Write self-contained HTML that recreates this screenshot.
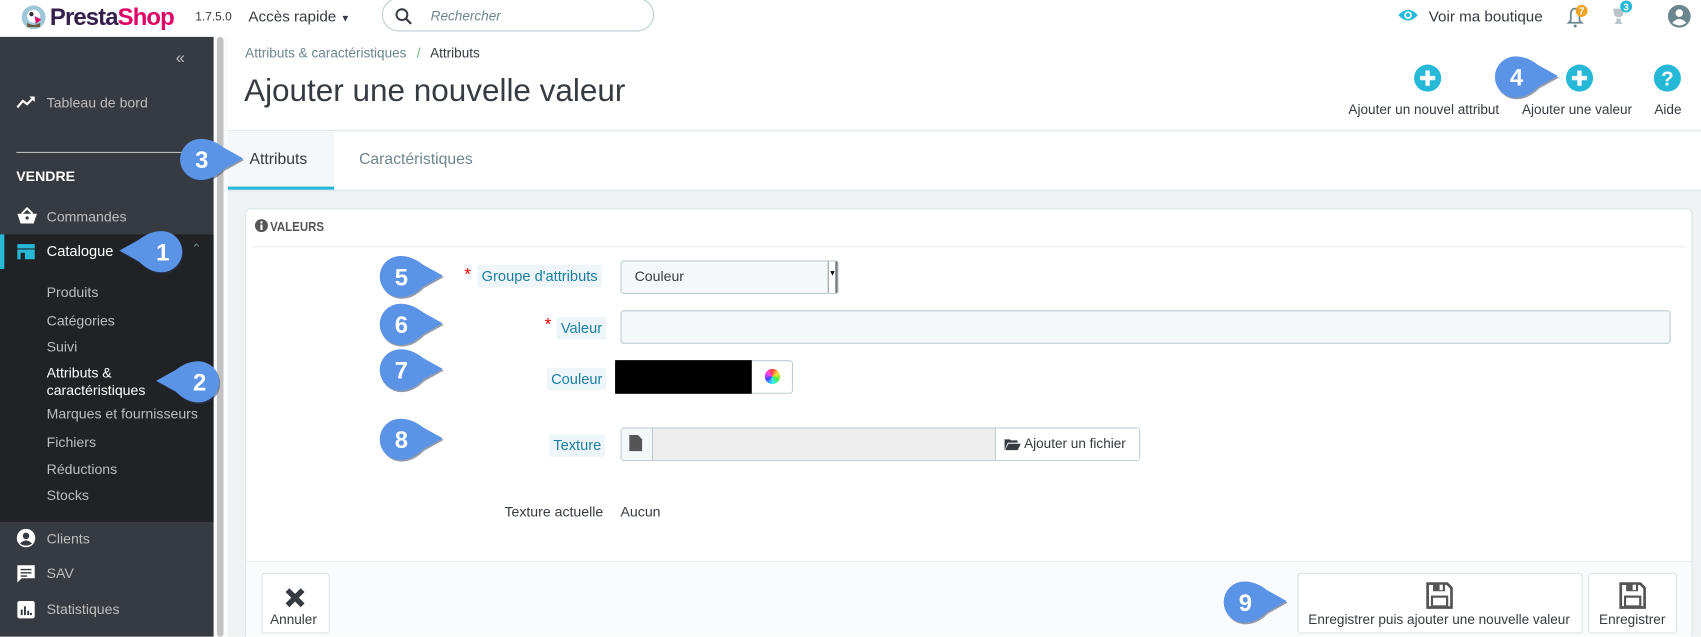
<!DOCTYPE html>
<html><head><meta charset="utf-8">
<style>
*{box-sizing:border-box;margin:0;padding:0}
html,body{width:1701px;height:637px;overflow:hidden;background:#fff;font-family:"Liberation Sans",sans-serif}
#w{position:absolute;left:0;top:0;width:1568px;height:587px;transform:scale(1.08482);transform-origin:0 0;overflow:hidden}
.a{position:absolute}
.t{position:absolute;white-space:nowrap}
.side{left:0;top:34px;width:197px;height:553px;background:#363a41}
.sub{left:0;top:248px;width:197px;height:233px;background:#202226}
.si{color:#bebebe;font-size:13px}
.lbl{position:absolute;background:#eef6fa;color:#1a7ea0;font-size:13.5px;padding:3px 4px;border-radius:2px}
.star{color:#e00;font-size:16px;position:absolute}
.inp{position:absolute;background:#f5f8f9;border:1px solid #bbcdd2;border-radius:3px}
.btn{position:absolute;background:#fff;border:1px solid #dde3e5;border-radius:3px;text-align:center;font-size:12.5px;color:#363a41}
.bub{position:absolute;width:62px;height:42px}
.bub span{position:absolute;top:0;height:42px;line-height:43px;width:40px;text-align:center;color:#fff;font-size:22px;font-weight:bold}
</style></head><body><div id="w">

<svg class="a" style="left:20px;top:5px" width="22" height="22" viewBox="0 0 22 22"><circle cx="11" cy="11" r="11" fill="#9ec8d8"/><circle cx="11" cy="10" r="6" fill="#fff"/><circle cx="9" cy="8" r="2" fill="#333"/><path d="M12 10 L18 13 L13 17Z" fill="#df0067"/><path d="M5 16 Q11 20 17 16 L17 20 L5 20Z" fill="#6b5a3e"/></svg>
<div class="t" style="left:46px;top:3px;font-size:22px;font-weight:bold;letter-spacing:-0.8px"><span style="color:#34204a">Presta</span><span style="color:#df0067">Shop</span></div>
<div class="t" style="left:180px;top:10px;font-size:11px;color:#363a41">1.7.5.0</div>
<div class="t" style="left:229px;top:7px;font-size:14px;color:#363a41">Accès rapide <span style="font-size:9px">▼</span></div>
<div class="a" style="left:352px;top:-2px;width:251px;height:31px;border:1px solid #bbcdd2;border-radius:16px"></div>
<svg class="a" style="left:364px;top:7px" width="16" height="16" viewBox="0 0 16 16"><circle cx="6.5" cy="6.5" r="5" fill="none" stroke="#363a41" stroke-width="1.8"/><path d="M10 10 L15 15" stroke="#363a41" stroke-width="2"/></svg>
<div class="t" style="left:397px;top:8px;font-size:12.5px;color:#6c868e;font-style:italic">Rechercher</div>
<svg class="a" style="left:1288px;top:7px" width="20" height="14" viewBox="0 0 20 14"><path d="M1 7 Q10 -3 19 7 Q10 17 1 7Z" fill="#25b9d7"/><circle cx="10" cy="7" r="3.5" fill="#fff"/><circle cx="10" cy="7" r="2" fill="#25b9d7"/></svg>
<div class="t" style="left:1317px;top:7px;font-size:14px;color:#363a41">Voir ma boutique</div>
<svg class="a" style="left:1442px;top:4px" width="24" height="22" viewBox="0 0 24 22"><path d="M4 17 L6 15 L6 9 Q6 4 10 4 Q14 4 14 9 L14 15 L16 17Z" fill="none" stroke="#6c868e" stroke-width="1.6"/><circle cx="10" cy="20" r="1.4" fill="#6c868e"/><circle cx="16" cy="6" r="5.5" fill="#f0a322"/><text x="16" y="9.5" font-size="9" fill="#fff" text-anchor="middle" font-family="Liberation Sans" font-weight="bold">7</text></svg>
<svg class="a" style="left:1482px;top:0px" width="26" height="26" viewBox="0 0 26 26"><path d="M5 8 L15 8 L14 14 Q10 18 6 14Z M8 17 L12 17 L12 20 L14 22 L6 22 L8 20Z" fill="#b7c3c8"/><circle cx="17" cy="6" r="5.5" fill="#25b9d7"/><text x="17" y="9.5" font-size="9" fill="#fff" text-anchor="middle" font-family="Liberation Sans" font-weight="bold">3</text></svg>
<svg class="a" style="left:1537px;top:4px" width="22" height="22" viewBox="0 0 22 22"><circle cx="11" cy="11" r="10.5" fill="#6c868e"/><circle cx="11" cy="8" r="3.5" fill="#fff"/><path d="M4.5 17 Q11 10 17.5 17 Q11 22 4.5 17Z" fill="#fff"/></svg>

<div class="a side"></div>
<div class="a sub"></div>
<div class="a" style="left:0;top:216px;width:197px;height:32px;background:#202226"></div>
<div class="a" style="left:0;top:216px;width:4px;height:32px;background:#25b9d7"></div>
<div class="a" style="left:197px;top:34px;width:13px;height:553px;background:#fafbfc"></div>
<div class="a" style="left:200px;top:34px;width:6px;height:553px;background:#c2c2c2;border-radius:3px"></div>
<div class="t" style="left:162px;top:45px;font-size:15px;color:#bebebe">«</div>
<svg class="a" style="left:15px;top:87px" width="18" height="14" viewBox="0 0 18 14"><path d="M1 12 L6 6 L10 9 L16 3" fill="none" stroke="#fff" stroke-width="2"/><path d="M12 2 L17 2 L17 7Z" fill="#fff"/></svg>
<div class="t si" style="left:43px;top:87px">Tableau de bord</div>
<div class="a" style="left:15px;top:140px;width:170px;height:1px;background:#bebebe"></div>
<div class="t" style="left:15px;top:155px;font-size:13px;font-weight:bold;color:#fff">VENDRE</div>
<svg class="a" style="left:15px;top:191px" width="20" height="16" viewBox="0 0 20 16"><path d="M1 6 L19 6 L16 15 L4 15Z" fill="#fff"/><path d="M5 6 L10 1 L15 6" fill="none" stroke="#fff" stroke-width="1.8"/><circle cx="10" cy="10" r="1.5" fill="#363a41"/></svg>
<div class="t si" style="left:43px;top:192px">Commandes</div>
<svg class="a" style="left:15px;top:224px" width="18" height="16" viewBox="0 0 18 16"><rect x="1" y="1" width="16" height="4" fill="#25b9d7"/><rect x="1" y="6" width="16" height="9" fill="#25b9d7"/><rect x="4" y="9" width="4" height="6" fill="#202226"/></svg>
<div class="t" style="left:43px;top:224px;font-size:13.5px;color:#fff">Catalogue</div>
<div class="t" style="left:176px;top:222px;font-size:12px;color:#6c868e">⌃</div>
<div class="t si" style="left:43px;top:262px">Produits</div>
<div class="t si" style="left:43px;top:288px">Catégories</div>
<div class="t si" style="left:43px;top:312px">Suivi</div>
<div class="t" style="left:43px;top:336px;font-size:13px;color:#fff;line-height:16px">Attributs &amp;<br>caractéristiques</div>
<div class="t si" style="left:43px;top:374px">Marques et fournisseurs</div>
<div class="t si" style="left:43px;top:400px">Fichiers</div>
<div class="t si" style="left:43px;top:425px">Réductions</div>
<div class="t si" style="left:43px;top:449px">Stocks</div>
<svg class="a" style="left:15px;top:487px" width="18" height="18" viewBox="0 0 18 18"><circle cx="9" cy="9" r="8.5" fill="#fff"/><circle cx="9" cy="7" r="3" fill="#363a41"/><path d="M3.5 14 Q9 8.5 14.5 14 Q9 18 3.5 14Z" fill="#363a41"/></svg>
<div class="t si" style="left:43px;top:489px">Clients</div>
<svg class="a" style="left:15px;top:520px" width="18" height="18" viewBox="0 0 18 18"><path d="M1 1 L17 1 L17 13 L5 13 L1 17Z" fill="#fff"/><path d="M4 5 H14 M4 8 H14 M4 11 H10" stroke="#363a41" stroke-width="1.3"/></svg>
<div class="t si" style="left:43px;top:521px">SAV</div>
<svg class="a" style="left:15px;top:553px" width="18" height="18" viewBox="0 0 18 18"><rect x="1" y="1" width="16" height="16" rx="2" fill="#fff"/><path d="M5 14 V9 M8 14 V6 M11 14 V10 M13.5 14 V12" stroke="#363a41" stroke-width="1.8"/></svg>
<div class="t si" style="left:43px;top:554px">Statistiques</div>

<div class="t" style="left:226px;top:42px;font-size:12.5px;color:#6c868e">Attributs &amp; caractéristiques <span style="color:#70b580;margin:0 6px">/</span> <span style="color:#363a41">Attributs</span></div>
<div class="t" style="left:225px;top:68px;font-size:29px;color:#363a41">Ajouter une nouvelle valeur</div>
<svg class="a" style="left:1303px;top:59px" width="26" height="26" viewBox="0 0 26 26"><circle cx="13" cy="13" r="12.5" fill="#25b9d7"/><path d="M13 6 V20 M6 13 H20" stroke="#fff" stroke-width="4"/></svg>
<div class="t" style="left:1243px;top:94px;font-size:12.5px;color:#363a41">Ajouter un nouvel attribut</div>
<svg class="a" style="left:1443px;top:59px" width="26" height="26" viewBox="0 0 26 26"><circle cx="13" cy="13" r="12.5" fill="#25b9d7"/><path d="M13 6 V20 M6 13 H20" stroke="#fff" stroke-width="4"/></svg>
<div class="t" style="left:1403px;top:94px;font-size:12.5px;color:#363a41">Ajouter une valeur</div>
<svg class="a" style="left:1524px;top:59px" width="26" height="26" viewBox="0 0 26 26"><circle cx="13" cy="13" r="12.5" fill="#25b9d7"/><text x="13" y="20" font-size="19" font-weight="bold" fill="#fff" text-anchor="middle" font-family="Liberation Sans">?</text></svg>
<div class="t" style="left:1525px;top:94px;font-size:12.5px;color:#363a41">Aide</div>
<div class="a" style="left:210px;top:120px;width:1358px;height:1px;background:#dbe6e9"></div>

<div class="a" style="left:210px;top:121px;width:98px;height:54px;background:#f4f8fb"></div>
<div class="a" style="left:210px;top:172px;width:98px;height:3px;background:#25b9d7"></div>
<div class="t" style="left:230px;top:139px;font-size:14.5px;color:#363a41">Attributs</div>
<div class="t" style="left:331px;top:139px;font-size:14.5px;color:#6c868e">Caractéristiques</div>
<div class="a" style="left:210px;top:175px;width:1358px;height:412px;background:#eff1f2;border-top:1px solid #dbe6e9"></div>

<div class="a" style="left:226px;top:192px;width:1334px;height:410px;background:#fff;border:1px solid #dbe6e9;border-radius:5px"></div>
<svg class="a" style="left:235px;top:202px" width="12" height="12" viewBox="0 0 12 12"><circle cx="6" cy="6" r="6" fill="#555"/><rect x="5" y="5" width="2" height="5" fill="#fff"/><circle cx="6" cy="3" r="1.1" fill="#fff"/></svg>
<div class="t" style="left:249px;top:202px;font-size:12px;font-weight:bold;color:#555;transform:scaleX(0.88);transform-origin:0 0">VALEURS</div>
<div class="a" style="left:232px;top:227px;width:1322px;height:1px;background:#eee"></div>

<span class="star" style="left:428px;top:245px">*</span>
<div class="lbl" style="left:440px;top:244px">Groupe d'attributs</div>
<div class="inp" style="left:572px;top:240px;width:201px;height:31px"></div>
<div class="t" style="left:585px;top:247px;font-size:13px;color:#363a41">Couleur</div>
<div class="a" style="left:763px;top:241px;width:9px;height:29px;background:#fff;border-left:1px solid #999;border-right:2px solid #777"></div>
<div class="t" style="left:764px;top:249px;font-size:7px;color:#000">▼</div>

<span class="star" style="left:502px;top:291px">*</span>
<div class="lbl" style="left:513px;top:292px">Valeur</div>
<div class="inp" style="left:572px;top:286px;width:968px;height:31px"></div>

<div class="lbl" style="left:504px;top:339px">Couleur</div>
<div class="a" style="left:567px;top:332px;width:164px;height:31px;border:1px solid #bbcdd2;border-radius:3px;background:#fff"></div>
<div class="a" style="left:567px;top:332px;width:126px;height:31px;background:#000"></div>
<div class="a" style="left:705px;top:340px;width:14px;height:14px;border-radius:50%;background:conic-gradient(#f44,#fd3,#4e4,#3ef,#44f,#f4f,#f44)"></div>

<div class="lbl" style="left:506px;top:400px">Texture</div>
<div class="a" style="left:572px;top:394px;width:479px;height:31px;border:1px solid #bbcdd2;border-radius:3px;background:#eee"></div>
<div class="a" style="left:573px;top:395px;width:29px;height:29px;background:#f5f8f9;border-right:1px solid #bbcdd2"></div>
<svg class="a" style="left:580px;top:401px" width="12" height="15" viewBox="0 0 12 15"><path d="M0 0 H8 L12 4 V15 H0Z" fill="#555"/></svg>
<div class="a" style="left:917px;top:395px;width:133px;height:29px;background:#fff;border-left:1px solid #bbcdd2"></div>
<svg class="a" style="left:926px;top:404px" width="15" height="11" viewBox="0 0 15 11"><path d="M0 1 H5 L6 2 H12 V4 H3 L0 11Z M3.5 5 H15 L12 11 H0.5Z" fill="#363a41"/></svg>
<div class="t" style="left:944px;top:402px;font-size:12.5px;color:#363a41">Ajouter un fichier</div>

<div class="t" style="left:465px;top:464px;font-size:13px;color:#363a41">Texture actuelle</div>
<div class="t" style="left:572px;top:464px;font-size:13px;color:#363a41">Aucun</div>

<div class="a" style="left:227px;top:517px;width:1332px;height:70px;background:#fafbfc;border-top:1px solid #eee"></div>
<div class="btn" style="left:241px;top:528px;width:63px;height:56px"></div>
<svg class="a" style="left:262px;top:541px" width="20" height="20" viewBox="0 0 20 20"><path d="M3 3 L17 17 M17 3 L3 17" stroke="#363a41" stroke-width="5"/></svg>
<div class="t" style="left:249px;top:564px;font-size:12.5px;color:#363a41">Annuler</div>
<div class="btn" style="left:1196px;top:528px;width:263px;height:56px"></div>
<svg class="a" style="left:1314px;top:536px" width="26" height="26" viewBox="0 0 26 26"><path d="M2 2 H20 L24 6 V24 H2Z" fill="none" stroke="#555" stroke-width="2.5"/><rect x="7" y="2" width="11" height="7" fill="#555"/><rect x="13" y="3" width="3" height="5" fill="#fff"/><rect x="6" y="14" width="14" height="9" fill="none" stroke="#555" stroke-width="2"/></svg>
<div class="t" style="left:1206px;top:564px;font-size:12.5px;color:#363a41">Enregistrer puis ajouter une nouvelle valeur</div>
<div class="btn" style="left:1464px;top:528px;width:82px;height:56px"></div>
<svg class="a" style="left:1492px;top:536px" width="26" height="26" viewBox="0 0 26 26"><path d="M2 2 H20 L24 6 V24 H2Z" fill="none" stroke="#555" stroke-width="2.5"/><rect x="7" y="2" width="11" height="7" fill="#555"/><rect x="13" y="3" width="3" height="5" fill="#fff"/><rect x="6" y="14" width="14" height="9" fill="none" stroke="#555" stroke-width="2"/></svg>
<div class="t" style="left:1474px;top:564px;font-size:12.5px;color:#363a41">Enregistrer</div>

<svg width="0" height="0" style="position:absolute"><defs>
<g id="br"><path d="M21 2 Q32 2 42 10 L60 20 L42 30 Q32 40 21 40 A19 19 0 0 1 21 2Z" fill="#2a3a5a" opacity=".5" transform="translate(1,1.5)"/><path d="M21 2 Q32 2 42 10 L60 20 L42 30 Q32 40 21 40 A19 19 0 0 1 21 2Z" fill="#5b93e6"/></g>
<g id="bl"><path d="M41 2 Q30 2 20 10 L2 20 L20 30 Q30 40 41 40 A19 19 0 0 0 41 2Z" fill="#2a3a5a" opacity=".5" transform="translate(1,1.5)"/><path d="M41 2 Q30 2 20 10 L2 20 L20 30 Q30 40 41 40 A19 19 0 0 0 41 2Z" fill="#5b93e6"/></g>
</defs></svg>
<div class="bub" style="left:348px;top:234px"><svg width="62" height="42"><use href="#br"/></svg><span style="left:2px">5</span></div>
<div class="bub" style="left:348px;top:278px"><svg width="62" height="42"><use href="#br"/></svg><span style="left:2px">6</span></div>
<div class="bub" style="left:348px;top:320px"><svg width="62" height="42"><use href="#br"/></svg><span style="left:2px">7</span></div>
<div class="bub" style="left:348px;top:384px"><svg width="62" height="42"><use href="#br"/></svg><span style="left:2px">8</span></div>
<div class="bub" style="left:1126px;top:534px"><svg width="62" height="42"><use href="#br"/></svg><span style="left:2px">9</span></div>
<div class="bub" style="left:1376px;top:50px"><svg width="62" height="42"><use href="#br"/></svg><span style="left:2px">4</span></div>
<div class="bub" style="left:164px;top:126px"><svg width="62" height="42"><use href="#br"/></svg><span style="left:2px">3</span></div>
<div class="bub" style="left:108px;top:211px"><svg width="62" height="42"><use href="#bl"/></svg><span style="left:22px">1</span></div>
<div class="bub" style="left:142px;top:331px"><svg width="62" height="42"><use href="#bl"/></svg><span style="left:22px">2</span></div>

</div></body></html>
